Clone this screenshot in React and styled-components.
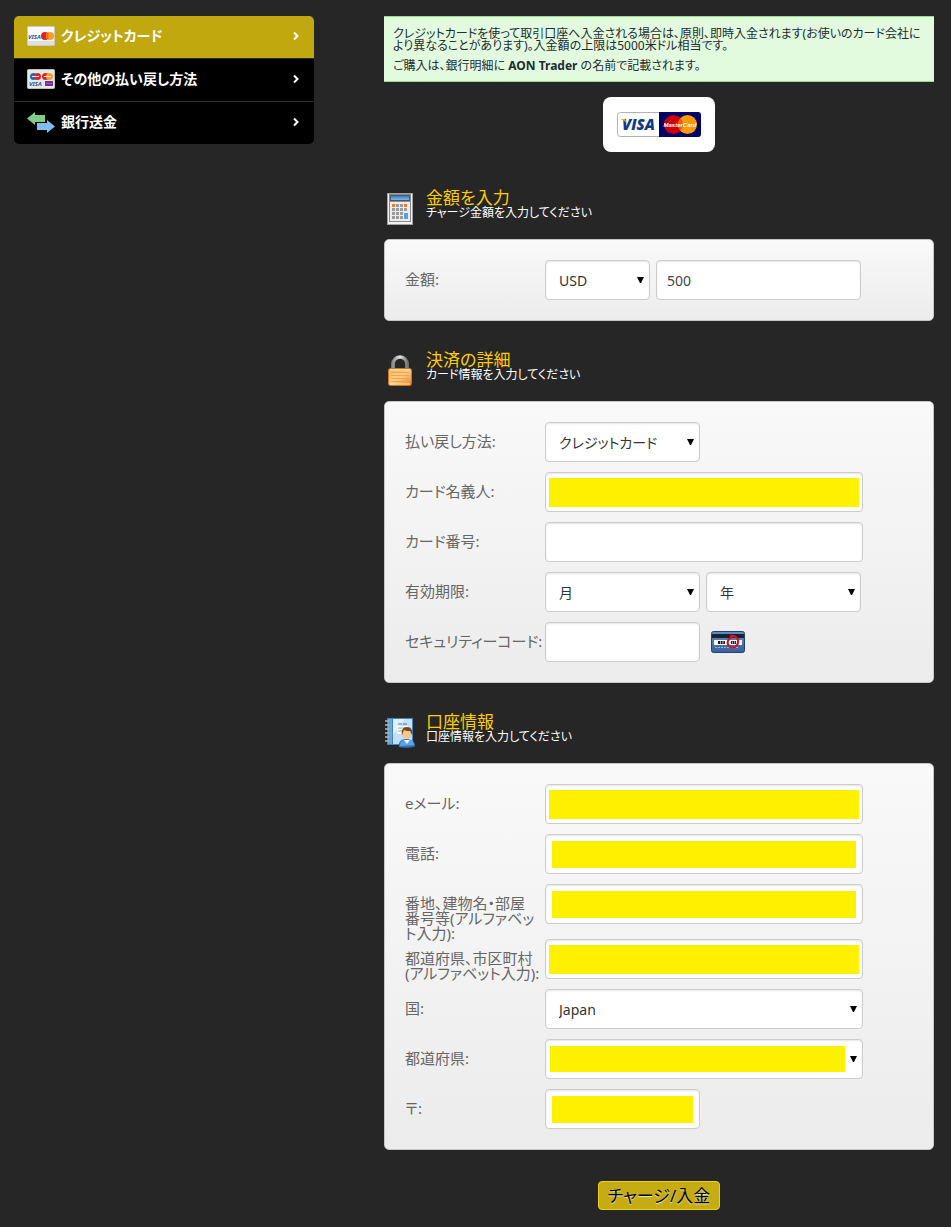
import React from 'react'
import styled, {createGlobalStyle} from "styled-components";

const GlobalStyle = createGlobalStyle`
  * {
    box-sizing: border-box;
  }

  body {
    margin: 0;
    background: #262626;
    color: #fff;
    font-family: "Noto Sans", "Noto Sans CJK JP", sans-serif;
    font-feature-settings: "palt";
    font-size: 14px;
  }

  h2, p, ul {
    margin: 0;
    padding: 0;
    font-weight: 400;
  }

  button, input, select {
    font: inherit;
    font-feature-settings: inherit;
  }
`

const months = Array.from({length: 12}, (_, i) => i + 1)
const years = Array.from({length: 10}, (_, i) => 2015 + i)

export default function App() {
    return (
        <Page>
            <GlobalStyle/>
            <Sidebar>
                <Menu>
                    <MenuItem>
                        <MenuLink href="#card" $active>
                            <CardIcon/>
                            <MenuText>クレジットカード</MenuText>
                            <Chevron/>
                        </MenuLink>
                    </MenuItem>
                    <MenuItem>
                        <MenuLink href="#other">
                            <CardsIcon/>
                            <MenuText>その他の払い戻し方法</MenuText>
                            <Chevron/>
                        </MenuLink>
                    </MenuItem>
                    <MenuItem>
                        <MenuLink href="#bank">
                            <TransferIcon/>
                            <MenuText>銀行送金</MenuText>
                            <Chevron/>
                        </MenuLink>
                    </MenuItem>
                </Menu>
            </Sidebar>
            <Main>
                <Notice>
                    <p>クレジットカードを使って取引口座へ入金される場合は、原則、即時入金されます(お使いのカード会社により異なることがあります)。入金額の上限は5000米ドル相当です。</p>
                    <p>ご購入は、銀行明細に <b>AON Trader</b> の名前で記載されます。</p>
                </Notice>
                <Brands>
                    <BrandsLogo/>
                </Brands>
                <Form onSubmit={(e) => e.preventDefault()}>
                    <Section>
                        <SectionHead icon={<CalculatorIcon/>} title="金額を入力" text="チャージ金額を入力してください"/>
                        <Panel>
                            <Row>
                                <Label htmlFor="amount">金額:</Label>
                                <Select id="currency" label="通貨" size="small">
                                    <option>USD</option>
                                    <option>EUR</option>
                                    <option>JPY</option>
                                </Select>
                                <Input id="amount" $size="medium" defaultValue="500"/>
                            </Row>
                        </Panel>
                    </Section>
                    <Section>
                        <SectionHead icon={<LockIcon/>} title="決済の詳細" text="カード情報を入力してください"/>
                        <Panel>
                            <Row>
                                <Label htmlFor="method">払い戻し方法:</Label>
                                <Select id="method" size="half">
                                    <option>クレジットカード</option>
                                </Select>
                            </Row>
                            <Row>
                                <Label htmlFor="holder">カード名義人:</Label>
                                <Input id="holder" $size="full" $fill="wide"/>
                            </Row>
                            <Row>
                                <Label htmlFor="number">カード番号:</Label>
                                <Input id="number" $size="full"/>
                            </Row>
                            <Row>
                                <Label htmlFor="month">有効期限:</Label>
                                <Select id="month" size="half">
                                    <option>月</option>
                                    {months.map((m) => <option key={m}>{m}</option>)}
                                </Select>
                                <Select id="year" label="年" size="half">
                                    <option>年</option>
                                    {years.map((y) => <option key={y}>{y}</option>)}
                                </Select>
                            </Row>
                            <Row>
                                <Label htmlFor="cvv">セキュリティーコード:</Label>
                                <Input id="cvv" $size="half"/>
                                <CvvHint>
                                    <CvvIcon/>
                                </CvvHint>
                            </Row>
                        </Panel>
                    </Section>
                    <Section>
                        <SectionHead icon={<ContactIcon/>} title="口座情報" text="口座情報を入力してください"/>
                        <Panel>
                            <Row>
                                <Label htmlFor="email">eメール:</Label>
                                <Input id="email" type="email" $size="full" $fill="wide"/>
                            </Row>
                            <Row>
                                <Label htmlFor="phone">電話:</Label>
                                <Input id="phone" type="tel" $size="full" $fill="inset"/>
                            </Row>
                            <Row>
                                <Label htmlFor="address">番地、建物名・部屋<br/>番号等(アルファベッ<br/>ト入力):</Label>
                                <Input id="address" $size="full" $fill="inset"/>
                            </Row>
                            <Row>
                                <Label htmlFor="city">都道府県、市区町村<br/>(アルファベット入力):</Label>
                                <Input id="city" $size="full" $fill="wide"/>
                            </Row>
                            <Row>
                                <Label htmlFor="country">国:</Label>
                                <Select id="country" size="full">
                                    <option>Japan</option>
                                </Select>
                            </Row>
                            <Row>
                                <Label htmlFor="state">都道府県:</Label>
                                <Select id="state" size="full" fill="select">
                                    <option value=""></option>
                                </Select>
                            </Row>
                            <Row>
                                <Label htmlFor="zip">〒:</Label>
                                <Input id="zip" $size="half" $fill="inset"/>
                            </Row>
                        </Panel>
                    </Section>
                    <Submit type="submit">チャージ/入金</Submit>
                </Form>
            </Main>
        </Page>
    )
}

function SectionHead({icon, title, text}) {
    return (
        <Head>
            <HeadIcon>{icon}</HeadIcon>
            <div>
                <Title>{title}</Title>
                <Description>{text}</Description>
            </div>
        </Head>
    )
}

function Select({id, label, size, fill, children}) {
    return (
        <SelectBox $size={size}>
            <SelectField id={id} aria-label={label} $fill={fill}>{children}</SelectField>
            <Arrow viewBox="0 0 7 6"><path d="M0 0h7L4 6H3z" fill="#000"/></Arrow>
        </SelectBox>
    )
}

function Chevron() {
    return (
        <svg width="8" height="10" viewBox="0 0 8 10" fill="none" stroke="#fff" strokeWidth="2">
            <path d="M2 1.5 5.500 5 2 8.500"/>
        </svg>
    )
}

function CardIcon() {
    return (
        <svg width="28" height="20" viewBox="0 0 28 20">
            <rect x=".5" y=".5" width="27" height="19" rx="1" fill="#f8f8f8" stroke="#c9c9c9"/>
            <path d="M1 15h26v4H1z" fill="#dfdfdf"/>
            <text x="1" y="12.500" fontSize="6" fontWeight="700" fontStyle="italic" fill="#1a5aa5">VISA</text>
            <circle cx="18" cy="10" r="4" fill="#e2231a"/>
            <circle cx="23" cy="10" r="4" fill="#f9a11b"/>
            <path d="M20.500 7v6" stroke="#ef6a1c" strokeWidth="2"/>
        </svg>
    )
}

function CardsIcon() {
    return (
        <svg width="28" height="20" viewBox="0 0 28 20">
            <rect x=".5" y=".5" width="27" height="19" rx="1" fill="#e8e8e8" stroke="#bdbdbd"/>
            <circle cx="6.500" cy="7.500" r="3.500" fill="#1c6fb5"/>
            <circle cx="10.500" cy="7.500" r="3.500" fill="#d6262b"/>
            <circle cx="18.500" cy="7.500" r="3.500" fill="#d6262b"/>
            <circle cx="22.500" cy="7.500" r="3.500" fill="#f2a02c"/>
            <path d="M5 7.500h7M17 7.500h7" stroke="#f3dede"/>
            <text x="2" y="17" fontSize="6" fontWeight="700" fontStyle="italic" fill="#215c9e">VISA</text>
            <path d="M18 12h8v5h-8z" fill="#7a2f8c"/>
            <path d="M19 14.500h6" stroke="#9a5fa8"/>
        </svg>
    )
}

function TransferIcon() {
    return (
        <svg width="28" height="21" viewBox="0 0 28 21">
            <path d="M0 6.500 8 0v3h10v7H8v3z" fill="#82cc89"/>
            <path d="M28 14.500 20 8v3H10v7h10v3z" fill="#7dbfee"/>
        </svg>
    )
}

function BrandsLogo() {
    return (
        <svg width="84" height="25" viewBox="0 0 84 25">
            <rect x=".5" y=".5" width="83" height="24" rx="3" fill="#fff" stroke="#b3b3b3"/>
            <path d="M42 0h39a3 3 0 0 1 3 3v19a3 3 0 0 1-3 3H42z" fill="#000066"/>
            <text x="5" y="18" fontFamily="Open Sans" fontSize="15" fontWeight="800" fontStyle="italic"
                  fill="#0e3a85">VISA</text>
            <path d="M3 7h5l2 5C8 9 6 8 3 7z" fill="#f5a21c"/>
            <circle cx="56.500" cy="12.500" r="9.500" fill="#cc0000"/>
            <circle cx="70.500" cy="12.500" r="9.500" fill="#ff9900"/>
            <path d="M63.500 6.300a9.500 9.500 0 0 1 0 12.400 9.500 9.500 0 0 1 0-12.400z" fill="#e85a0c"/>
            <text x="63" y="15" textAnchor="middle" fontFamily="Liberation Sans" fontSize="6" fontWeight="700"
                  fontStyle="italic" fill="#fff">MasterCard</text>
        </svg>
    )
}

function CalculatorIcon() {
    const keys = []
    for (let y = 0; y < 4; y++) {
        for (let x = 0; x < 4; x++) {
            if (x === 3 && y > 1) continue
            keys.push({x: 5 + x * 4, y: 11 + y * 4, fill: y === 0 && (x === 0 || x === 3) ? '#f47b20' : '#9b9b9b'})
        }
    }
    return (
        <svg width="26" height="32" viewBox="0 0 26 32">
            <defs>
                <linearGradient id="screen-fill" x2="0" y2="1">
                    <stop stopColor="#2f7fd0"/>
                    <stop offset="1" stopColor="#7db9ee"/>
                </linearGradient>
            </defs>
            <path d="M0 0h26v32H0z" fill="#a2a2a2"/>
            <path d="M1 1h24v30H1z" fill="#f1f1f1"/>
            <path d="M2 1h22v28H2z" fill="#8a8a8a"/>
            <path d="M3 9h20v19H3z" fill="#ececec"/>
            <path d="M3 2h20v6H3z" fill="#555"/>
            <path d="M4 3h18v4H4z" fill="url(#screen-fill)"/>
            {keys.map((k) => <rect key={`${k.x}-${k.y}`} x={k.x} y={k.y} width="3" height="3" fill={k.fill}/>)}
            <path d="M17 20h4v6h-4z" fill="#5aa0df"/>
        </svg>
    )
}

function LockIcon() {
    return (
        <svg width="24" height="31" viewBox="0 0 24 31">
            <defs>
                <linearGradient id="lock-fill" x2="1" y2="1">
                    <stop stopColor="#fcb962"/>
                    <stop offset=".5" stopColor="#fccf83"/>
                    <stop offset="1" stopColor="#e67e24"/>
                </linearGradient>
                <linearGradient id="shackle-fill" x2="1">
                    <stop stopColor="#8d8d8d"/>
                    <stop offset=".5" stopColor="#e8e8e8"/>
                    <stop offset="1" stopColor="#777"/>
                </linearGradient>
            </defs>
            <path d="M5 15V9a7 7 0 0 1 14 0v6" fill="none" stroke="#666" strokeWidth="4"/>
            <path d="M5 15V9a7 7 0 0 1 14 0v6" fill="none" stroke="url(#shackle-fill)" strokeWidth="3"/>
            <rect x=".5" y="13.500" width="23" height="17" rx="2" fill="url(#lock-fill)" stroke="#d2711e"/>
            <path d="M3 17.500h18M3 20.500h18M3 23.500h18M3 26.500h18" stroke="#f0a650"/>
            <path d="M2 14.500h20M2 29h20" stroke="#ffe3ad"/>
        </svg>
    )
}

function ContactIcon() {
    return (
        <svg width="30" height="31" viewBox="0 0 30 31">
            <path d="M2 1h26v27H2z" fill="#3d86c2"/>
            <path d="M3 2h4v25H3z" fill="#6aa9dc"/>
            <path d="M8 2h19v25H8z" fill="#c4e0f6"/>
            <path d="M8 2h12L8 18z" fill="#e0f0fc"/>
            <path d="M0 4h4M0 8h4M0 12h4M0 16h4M0 20h4M0 24h4" stroke="#b5b5b5" strokeWidth="1.500"/>
            <path d="M13 7h4M18 7h4" stroke="#5379a0"/>
            <path d="M12 9h11v8H12z" fill="#fff"/>
            <path d="M13 11h8M13 14h5" stroke="#8ea2b5"/>
            <path d="M14 30c-1-5 2-8 7-8s9 2 9 7c0 2-15 2-16 1z" fill="#2f74c0"/>
            <path d="M15 29c0-4 2-6 5-6l2 4 3-4c2 0 4 2 4 5z" fill="#5fa3e8"/>
            <path d="m19 23 3 4 3-4z" fill="#fff"/>
            <circle cx="22" cy="17" r="5" fill="#f4c794"/>
            <path d="M17 18c-1-5 1-8 5-8s6 3 5 8l-2-4c-2 0-4 0-6-1z" fill="#7b451e"/>
        </svg>
    )
}

function CvvIcon() {
    return (
        <svg width="34" height="22" viewBox="0 0 34 22">
            <defs>
                <linearGradient id="cvv-fill" x2="0" y2="1">
                    <stop stopColor="#5b8fce"/>
                    <stop offset="1" stopColor="#3a5f9c"/>
                </linearGradient>
            </defs>
            <rect x=".5" y=".5" width="33" height="21" rx="2" fill="url(#cvv-fill)" stroke="#25406e"/>
            <path d="M1 3h32v4H1z" fill="#1f2226"/>
            <path d="M3 9h28v5H3z" fill="#fff"/>
            <path d="M7 11.500h7" stroke="#222" strokeWidth="3" strokeDasharray="2 .6"/>
            <path d="M20 11.500h5" stroke="#222" strokeWidth="3" strokeDasharray="1.500 .5"/>
            <path d="M4 16.500h24" stroke="#8fb2de" strokeDasharray="2 1"/>
            <path d="M19 5c6-1 9 3 8 7s-6 6-9 3-1-8 4-9" fill="none" stroke="#d8121c" strokeWidth="2"/>
        </svg>
    )
}

const sizes = {
    small: '105px',
    half: '155px',
    medium: '205px',
    full: '318px',
}

// space between the border and the yellow fill
const fills = {
    wide: '5px 3px 4px',
    inset: '6px 6px 5px',
    select: '6px 17px 6px 4px',
}

const Page = styled.div`
  display: flex;
  align-items: flex-start;
  gap: 70px;
  padding: 16px 17px 18px 14px;
`

const Sidebar = styled.nav`
  flex: 0 0 300px;
`

const Menu = styled.ul`
  list-style: none;
  border-radius: 5px;
  overflow: hidden;
`

const MenuItem = styled.li`
  & + & {
    border-top: 1px solid #2b2b2b;
  }
`

const MenuLink = styled.a`
  display: flex;
  align-items: center;
  gap: 6px;
  height: 42px;
  padding: 0 14px 2px 13px;
  background: ${(p) => p.$active ? '#c1a80f' : '#000'};
  color: #fff;
  font-weight: 700;
  text-decoration: none;
`

const MenuText = styled.span`
  flex: 1;
  line-height: 20px;
`

const Main = styled.main`
  flex: 1;
  min-width: 0;
`

const Notice = styled.div`
  padding: 11px 9px 9px;
  background: #e2fbdf;
  border: solid #94e085;
  border-width: 1px 0;
  color: #222b33;
  font-size: 12px;
  line-height: 12px;

  p + p {
    margin-top: 8px;
  }
`

const Brands = styled.div`
  display: flex;
  align-items: center;
  justify-content: center;
  width: 112px;
  height: 55px;
  margin: 15px auto 38px;
  background: #fff;
  border-radius: 8px;
`

const Form = styled.form`
  display: flex;
  flex-direction: column;
`

const Section = styled.section`
  margin-bottom: 31px;
`

const Head = styled.header`
  display: flex;
  height: 49px;
`

const HeadIcon = styled.div`
  display: flex;
  align-items: flex-start;
  justify-content: center;
  width: 32px;
  margin-right: 10px;
  padding-top: 3px;
`

const Title = styled.h2`
  color: #fc0;
  font-size: 17px;
  line-height: 16px;
`

const Description = styled.p`
  font-size: 12px;
  line-height: 14px;
`

const Panel = styled.div`
  padding: 20px 20px 10px;
  background: linear-gradient(#f9f9f9, #ececec);
  border: 1px solid #c6c6c6;
  border-radius: 5px;
`

const Row = styled.div`
  display: flex;
  align-items: flex-start;
  gap: 6px;
`

const Label = styled.label`
  flex: none;
  width: 140px;
  padding-top: 12px;
  margin: 0 -6px -2px 0;
  color: #666;
  font-size: 15px;
  line-height: 15px;
  white-space: nowrap;
`

const Input = styled.input`
  width: ${(p) => sizes[p.$size]};
  height: 40px;
  margin-bottom: 10px;
  padding: ${(p) => fills[p.$fill] || '0 10px'};
  background: ${(p) => p.$fill ? 'linear-gradient(#fff000, #fff000) content-box, #fff' : '#fff'};
  border: 1px solid #ccc;
  border-radius: 4px;
  box-shadow: inset 0 1px 2px rgba(0, 0, 0, 0.1);
  color: #444;
  outline: none;
`

const SelectBox = styled.div`
  position: relative;
  width: ${(p) => sizes[p.$size]};
  margin-bottom: 10px;
`

const SelectField = styled.select`
  appearance: none;
  display: block;
  width: 100%;
  height: 40px;
  padding: ${(p) => fills[p.$fill] || '0 13px'};
  background: ${(p) => p.$fill ? 'linear-gradient(#fff000, #fff000) content-box, #fff' : '#fff'};
  border: 1px solid #ccc;
  border-radius: 4px;
  box-shadow: inset 0 1px 2px rgba(0, 0, 0, 0.1);
  color: #333;
  outline: none;
`

const Arrow = styled.svg`
  position: absolute;
  top: 17px;
  right: 6px;
  width: 7px;
  height: 6px;
  pointer-events: none;
`

const CvvHint = styled.span`
  display: flex;
  align-items: center;
  height: 40px;
  padding-left: 5px;
`

const Submit = styled.button`
  align-self: center;
  height: 29px;
  padding: 0 9px;
  background: #c6ac13;
  border: 1px solid #f0cf1c;
  border-radius: 4px;
  color: #000;
  font-size: 17px;
  line-height: 24px;
  text-shadow: 0 1px 1px rgba(255, 255, 255, 0.75);
  cursor: pointer;
`
